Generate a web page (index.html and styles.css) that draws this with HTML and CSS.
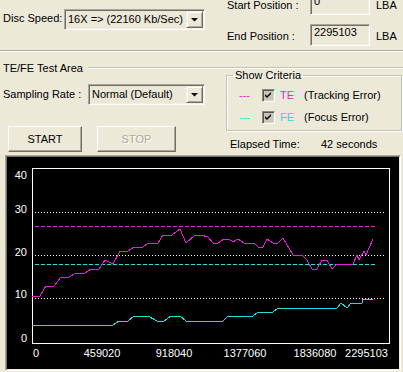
FILE: index.html
```html
<!DOCTYPE html>
<html>
<head>
    <title>TE/FE Test</title>
    <link rel="stylesheet" href="styles.css">
</head>
<body>
    <div class="top">
        <div class="speed-row">
            <span class="speed-label">Disc Speed:</span>
            <div class="combo speed-combo">
                <span class="combo-text">16X =&gt; (22160 Kb/Sec)</span>
                <span class="drop"><svg width="7" height="4" viewBox="0 0 7 4"><polygon points="0,0 7,0 3.5,3.5" fill="#000"/></svg></span>
            </div>
        </div>
        <div class="range">
            <div class="range-row">
                <span class="range-label">Start Position :</span>
                <div class="field">0</div>
                <span class="unit">LBA</span>
            </div>
            <div class="range-row">
                <span class="range-label">End Position :</span>
                <div class="field">2295103</div>
                <span class="unit">LBA</span>
            </div>
        </div>
    </div>
    <div class="sep"></div>

    <div class="area-title">
        <span class="area-title-text">TE/FE Test Area</span>
        <span class="area-title-line"></span>
    </div>
    <div class="area">
        <div class="area-left">
            <div class="rate-row">
                <span class="rate-label">Sampling Rate :</span>
                <div class="combo rate-combo">
                    <span class="combo-text">Normal (Default)</span>
                    <span class="drop"><svg width="7" height="4" viewBox="0 0 7 4"><polygon points="0,0 7,0 3.5,3.5" fill="#000"/></svg></span>
                </div>
            </div>
            <div class="buttons">
                <div class="btn btn-start">START</div>
                <div class="btn btn-stop">STOP</div>
            </div>
        </div>
        <div class="area-right">
            <fieldset class="criteria">
                <legend>Show Criteria</legend>
                <div class="crit-row">
                    <span class="dash te">---</span>
                    <span class="check"><svg width="7" height="7" viewBox="0 0 7 7"><path d="M0 2 L2 4 L6 0 L6 2 L2 6 L0 4 Z" fill="#000"/></svg></span>
                    <span class="crit-code te">TE</span>
                    <span>(Tracking Error)</span>
                </div>
                <div class="crit-row">
                    <span class="dash fe">---</span>
                    <span class="check"><svg width="7" height="7" viewBox="0 0 7 7"><path d="M0 2 L2 4 L6 0 L6 2 L2 6 L0 4 Z" fill="#000"/></svg></span>
                    <span class="crit-code fe">FE</span>
                    <span>(Focus Error)</span>
                </div>
            </fieldset>
            <div class="elapsed">
                <span class="elapsed-label">Elapsed Time:</span>
                <span>42 seconds</span>
            </div>
        </div>
    </div>

    <div class="chart">
        <div class="chart-inner">
            <svg class="plot" width="392" height="212" viewBox="7 157 392 212" shape-rendering="crispEdges">
                <rect x="32.5" y="168.5" width="357" height="175" fill="none" stroke="#fff"/>
                <!-- grid -->
                <line x1="35" y1="212.5" x2="386" y2="212.5" stroke="#fff" stroke-dasharray="1 2"/>
                <line x1="35" y1="255.5" x2="386" y2="255.5" stroke="#fff" stroke-dasharray="1 2"/>
                <line x1="35" y1="298.5" x2="386" y2="298.5" stroke="#fff" stroke-dasharray="1 2"/>
                <!-- limits -->
                <line x1="35" y1="226.5" x2="377" y2="226.5" stroke="#e81ed8" stroke-dasharray="4 2"/>
                <line x1="35" y1="264.5" x2="377" y2="264.5" stroke="#1ee0dc" stroke-dasharray="4 2"/>
                <!-- data -->
                <polyline fill="none" stroke="#e81ed8" points="32,296 40,296 46,286 54,286 61,277 69,277 76,273 85,273 91,269 99,269 105,260 109,262 113,264 120,251 128,251 134,247 143,247 148,243 158,243 163,235 172,235 180,229 186,243 195,235 201,235 208,237 213,243 218,243 224,239 229,239 233,242 238,239 244,243 254,243 258,247 263,247 267,239 273,243 278,243 283,238 293,255 302,255 307,260 312,269 317,269 322,260 327,260 332,269 337,264 353,264 357,255 359,260 364,251 366,255 373,239"/>
                <polyline fill="none" stroke="#1ee0dc" points="32,325 113,325 119,321 128,321 134,316 148,316 157,321 164,321 171,316 180,316 186,321 223,321 228,316 253,316 258,312 273,312 278,308 337,308 341,303 347,308 351,303 362,303 363,299 373,299"/>
                <!-- axis labels -->
                <g class="axis">
                    <text x="27" y="179" text-anchor="end">40</text>
                    <text x="27" y="212.5" text-anchor="end">30</text>
                    <text x="27" y="256" text-anchor="end">20</text>
                    <text x="27" y="298" text-anchor="end">10</text>
                    <text x="27" y="342" text-anchor="end">0</text>
                    <text x="33" y="357">0</text>
                    <text x="102" y="357" text-anchor="middle">459020</text>
                    <text x="174" y="357" text-anchor="middle">918040</text>
                    <text x="245" y="357" text-anchor="middle">1377060</text>
                    <text x="315" y="357" text-anchor="middle">1836080</text>
                    <text x="366.5" y="357" text-anchor="middle">2295103</text>
                </g>
            </svg>
        </div>
    </div>
</body>
</html>
```

FILE: styles.css
```css
body {
    margin: 0;
    background-color: #ece9d8;
    font-family: "Liberation Sans", Arial, sans-serif;
    font-size: 11px;
    line-height: 13px;
    color: #000;
    overflow: hidden;
}

/* top bar */
.top {
    height: 50px;
    display: flex;
    align-items: flex-start;
}
.speed-row {
    width: 227px;
    display: flex;
    align-items: center;
    margin-top: 9px;
    padding-left: 3px;
    box-sizing: border-box;
}
.speed-label {
    width: 61px;
    margin-top: -2px;
}
.combo {
    display: flex;
    height: 21px;
    box-sizing: border-box;
    border: 1px solid;
    border-color: #aca899 #fff #fff #aca899;
    box-shadow: inset 1px 1px #716f64, inset -1px -1px #f1efe2;
    padding: 1px;
    background-color: #ebe8d7;
}
.speed-combo {
    width: 141px;
}
.rate-combo {
    width: 117px;
}
.combo-text {
    flex: 1;
    padding-left: 2px;
    line-height: 17px;
    white-space: nowrap;
    overflow: hidden;
}
.drop {
    width: 17px;
    height: 17px;
    box-sizing: border-box;
    border: 1px solid;
    border-color: #f1efe2 #716f64 #716f64 #f1efe2;
    box-shadow: inset 1px 1px #fff, inset -1px -1px #aca899;
    background-color: #ece9d8;
    display: flex;
    align-items: center;
    justify-content: center;
}
.drop svg {
    display: block;
}
.range {
    margin-top: -7px;
    display: flex;
    flex-direction: column;
    gap: 9px;
}
.range-row {
    display: flex;
    align-items: center;
    height: 22px;
}
.range-label {
    width: 83px;
    padding-top: 3px;
    white-space: nowrap;
}
.field {
    width: 60px;
    height: 22px;
    box-sizing: border-box;
    border: 1px solid;
    border-color: #aca899 #fff #fff #aca899;
    box-shadow: inset 1px 1px #716f64, inset -1px -1px #f1efe2;
    padding: 1px 0 0 3px;
    background-color: #ebe8d7;
}
.unit {
    margin-left: 6px;
    padding-top: 3px;
}
.sep {
    border-top: 1px solid #aca899;
    border-bottom: 1px solid #fff;
}

/* test area */
.area-title {
    display: flex;
    margin-top: 10px;
}
.area-title-text {
    width: 85px;
    padding-left: 3px;
    white-space: nowrap;
}
.area-title-line {
    flex: 1;
    height: 0;
    margin-top: 5px;
    border-top: 1px solid #c5c2b2;
    border-bottom: 1px solid #fff;
}
.area {
    display: flex;
    height: 80px;
}
.area-left {
    width: 226px;
}
.rate-row {
    display: flex;
    align-items: center;
    margin-top: 9px;
    padding-left: 3px;
}
.rate-label {
    width: 85px;
    white-space: nowrap;
}
.buttons {
    display: flex;
    margin-top: 21px;
    padding-left: 8px;
}
.btn {
    height: 26px;
    box-sizing: border-box;
    border: 1px solid;
    border-color: #fff #716f64 #716f64 #fff;
    box-shadow: inset -1px -1px #aca899;
    display: flex;
    align-items: center;
    justify-content: center;
}
.btn-start {
    width: 74px;
}
.btn-stop {
    width: 79px;
    margin-left: 15px;
    color: #aca899;
    text-shadow: 1px 1px #fff;
}
.area-right {
    width: 176px;
    margin-top: -6px;
}
.criteria {
    margin: 0;
    padding: 2px 0 2px 6px;
    border: 1px solid #c5c2b2;
    box-shadow: 1px 1px #fff, inset 1px 1px #fff;
}
.criteria legend {
    padding: 0 2px;
}
.crit-row {
    display: flex;
    align-items: center;
    height: 22px;
}
.dash {
    width: 23px;
    margin-left: 6px;
}
.check {
    width: 13px;
    height: 13px;
    box-sizing: border-box;
    border: 1px solid;
    border-color: #8e8b7e #fff #fff #8e8b7e;
    box-shadow: inset 1px 1px #55534a, inset -1px -1px #d8d5c6;
    background-color: #c9c6b6;
    display: flex;
    align-items: center;
    justify-content: center;
}
.check svg {
    display: block;
}
.crit-code {
    width: 24px;
    margin-left: 5px;
}
.te {
    color: #e81ed8;
}
.fe {
    color: #1ee0dc;
}
.elapsed {
    display: flex;
    margin-top: 7px;
    padding-left: 4px;
}
.elapsed-label {
    width: 91px;
}

/* chart */
.chart {
    margin-left: 5px;
    width: 396px;
    height: 216px;
    box-sizing: border-box;
    border: 1px solid;
    border-color: #aca899 #fff #fff #aca899;
}
.chart-inner {
    height: 212px;
    border: 1px solid;
    border-color: #716f64 #f1efe2 #f1efe2 #716f64;
    background-color: #000;
}
.plot {
    display: block;
}
.axis text {
    fill: #fff;
    font-family: "Liberation Sans", Arial, sans-serif;
    font-size: 11px;
}
```
